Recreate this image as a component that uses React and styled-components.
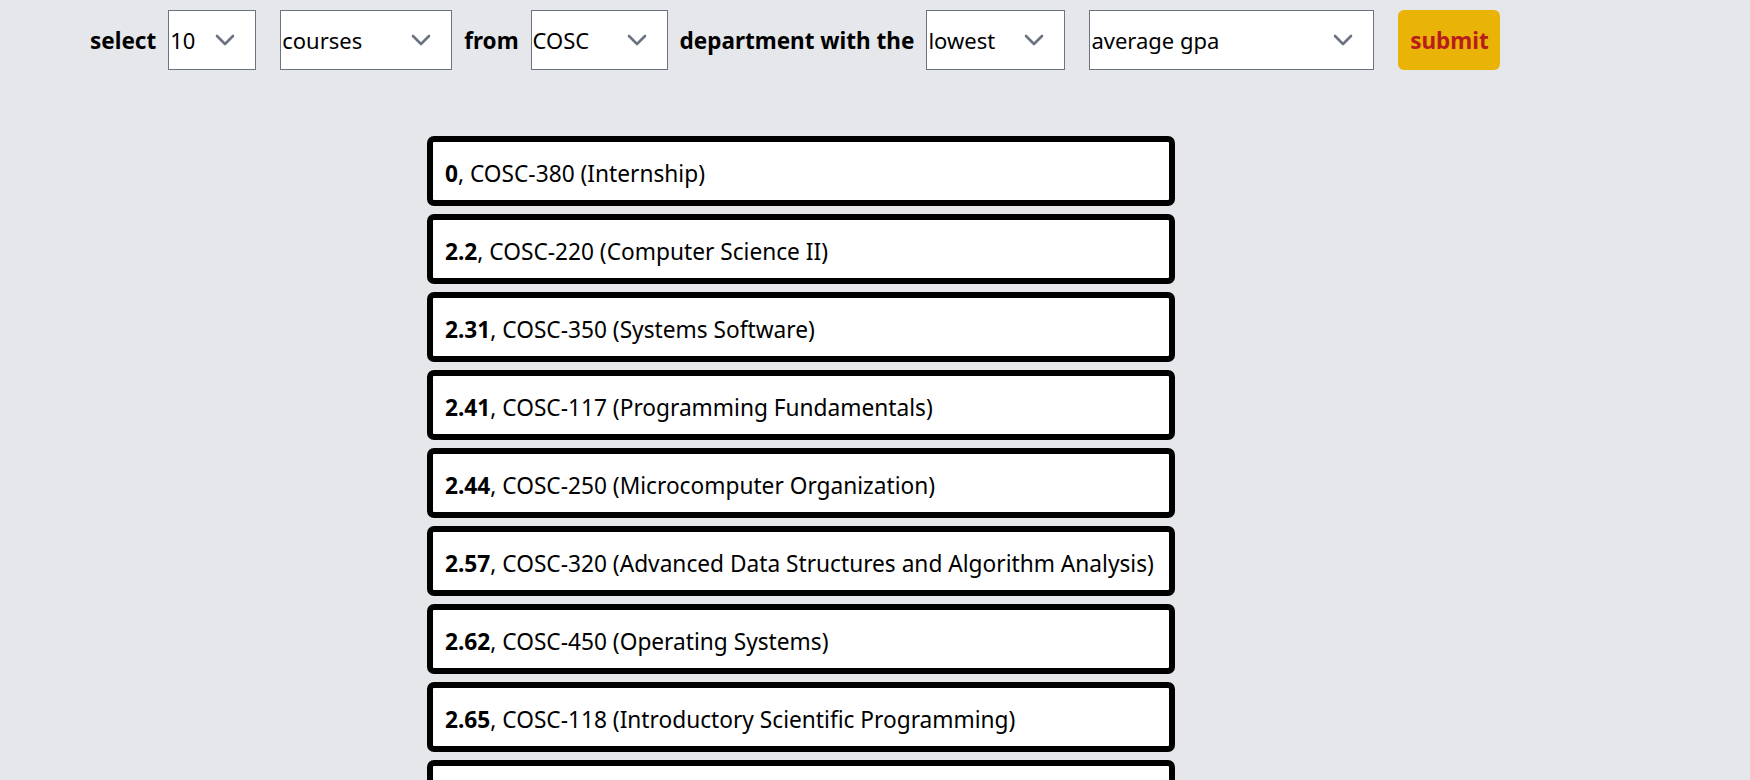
import React from "react";
import styled, { createGlobalStyle } from "styled-components";

const GlobalStyle = createGlobalStyle`
  html, body {
    margin: 0;
    padding: 0;
    background: #e5e7eb;
    font-family: "Noto Sans", "Open Sans", sans-serif;
  }
`;

const courses = [
  { gpa: "0", code: "COSC-380", name: "Internship" },
  { gpa: "2.2", code: "COSC-220", name: "Computer Science II" },
  { gpa: "2.31", code: "COSC-350", name: "Systems Software" },
  { gpa: "2.41", code: "COSC-117", name: "Programming Fundamentals" },
  { gpa: "2.44", code: "COSC-250", name: "Microcomputer Organization" },
  { gpa: "2.57", code: "COSC-320", name: "Advanced Data Structures and Algorithm Analysis" },
  { gpa: "2.62", code: "COSC-450", name: "Operating Systems" },
  { gpa: "2.65", code: "COSC-118", name: "Introductory Scientific Programming" },
  { gpa: "2.67", code: "COSC-420", name: "Database Management Systems" },
  { gpa: "2.7", code: "COSC-311", name: "Computer Architecture" },
];

const Chevron = () => (
  <ChevronIcon width="20" height="12" viewBox="0 0 20 12">
    <path
      d="M2 2l8 8 8-8"
      fill="none"
      stroke="#6b7280"
      strokeWidth="2.6"
      strokeLinecap="round"
      strokeLinejoin="round"
    />
  </ChevronIcon>
);

const Dropdown = ({ width, value, options }) => (
  <SelectWrap $width={width}>
    <Select defaultValue={value}>
      {options.map((o) => (
        <option key={o} value={o}>
          {o}
        </option>
      ))}
    </Select>
    <Chevron />
  </SelectWrap>
);

const App = () => {
  return (
    <Page>
      <GlobalStyle />
      <Toolbar>
        <Label>select</Label>
        <Dropdown width={88} value="10" options={["5", "10", "20", "50"]} />
        <Dropdown
          width={172}
          value="courses"
          options={["courses", "professors"]}
        />
        <Label>from</Label>
        <Dropdown width={137} value="COSC" options={["COSC", "MATH", "ENGL"]} />
        <Label>department with the</Label>
        <Dropdown width={139} value="lowest" options={["lowest", "highest"]} />
        <Dropdown
          width={285}
          value="average gpa"
          options={["average gpa", "percent A", "percent F"]}
        />
        <SubmitBtn>submit</SubmitBtn>
      </Toolbar>
      <List>
        {courses.map((c) => (
          <Item key={c.code}>
            <span>
              <b>{c.gpa}</b>, {c.code} ({c.name})
            </span>
          </Item>
        ))}
      </List>
    </Page>
  );
};

const Page = styled.div`
  min-height: 100vh;
  background: #e5e7eb;
`;

const Toolbar = styled.div`
  display: flex;
  align-items: center;
  height: 60px;
  padding: 10px 0 0 90px;
`;

const Label = styled.span`
  font-size: 22.5px;
  font-weight: 700;
  color: #000;
  white-space: nowrap;
`;

const SelectWrap = styled.div`
  position: relative;
  width: ${(props) => props.$width}px;
  height: 60px;
  margin: 0 12px;
  flex-shrink: 0;
`;

const Select = styled.select`
  appearance: none;
  width: 100%;
  height: 100%;
  box-sizing: border-box;
  border: 1px solid #6b7280;
  border-radius: 0;
  background: #fff;
  padding: 0 0 0 1px;
  font-family: "Noto Sans", sans-serif;
  font-size: 22px;
  color: #000;
  outline: none;
`;

const ChevronIcon = styled.svg`
  position: absolute;
  right: 21px;
  top: 24px;
  pointer-events: none;
`;

const SubmitBtn = styled.button`
  height: 60px;
  width: 102px;
  margin: 0 12px;
  border: none;
  border-radius: 6px;
  background: #eab308;
  color: #b91c1c;
  font-family: "Noto Sans", sans-serif;
  font-size: 22.5px;
  font-weight: 700;
  cursor: pointer;
`;

const List = styled.div`
  display: flex;
  flex-direction: column;
  gap: 8px;
  width: 748px;
  margin: 66px 0 0 427px;
`;

const Item = styled.div`
  display: flex;
  align-items: center;
  box-sizing: border-box;
  height: 70px;
  padding: 4px 12px 0;
  border: 6px solid #000;
  border-radius: 7px;
  background: #fff;
  font-size: 22.7px;
  color: #000;
  white-space: nowrap;
  overflow: hidden;
`;

export default App;
